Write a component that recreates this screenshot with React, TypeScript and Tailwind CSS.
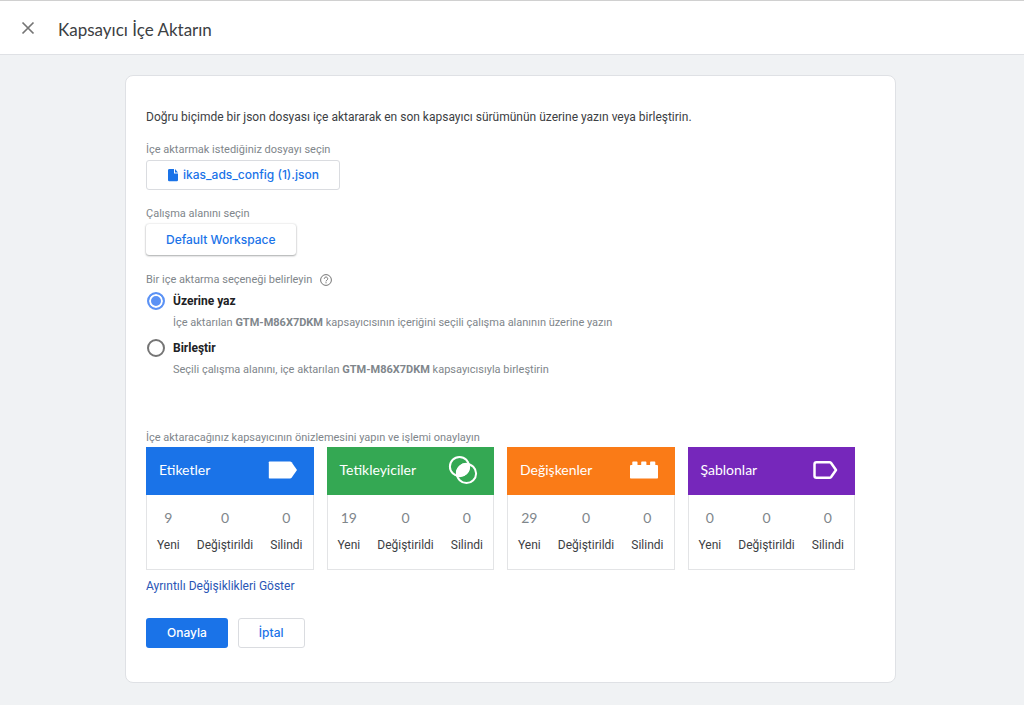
import { useState } from "react";
import type { ReactNode } from "react";

type Summary = {
    title: string;
    color: string;
    icon: ReactNode;
    counts: [number, number, number];
};

const COUNT_LABELS = ["Yeni", "Değiştirildi", "Silindi"];

const summaries: Summary[] = [
    {
        title: "Etiketler",
        color: "bg-[#1a73e8]",
        counts: [9, 0, 0],
        icon: (
            <svg viewBox="0 0 30 30" className="size-[30px]" fill="currentColor" aria-hidden="true">
                <path d="M1.500 6.500h20.500q1 0 1.600.8L29 15l-5.400 7.700q-.6.8-1.600.8H1.500q-.7 0-.7-.7V7.200q0-.7.7-.7z" />
            </svg>
        ),
    },
    {
        title: "Tetikleyiciler",
        color: "bg-[#34a853]",
        counts: [19, 0, 0],
        icon: (
            <svg viewBox="0 0 30 30" className="size-[30px]" fill="none" stroke="currentColor" strokeWidth="2" aria-hidden="true">
                <circle cx="11.500" cy="11.500" r="9.600" />
                <circle cx="18.500" cy="18.500" r="9.600" />
                <path d="M20.800 9.200A9.600 9.600 0 0 1 9.200 20.800A9.600 9.600 0 0 1 20.800 9.200z" fill="currentColor" />
            </svg>
        ),
    },
    {
        title: "Değişkenler",
        color: "bg-[#fa7b17]",
        counts: [29, 0, 0],
        icon: (
            <svg viewBox="0 0 30 30" className="size-[30px]" fill="currentColor" aria-hidden="true">
                <path d="M1 11q0-1 1-1h1.300V7.200q0-.7.700-.7h3.800q.7 0 .7.700V10h3.700V7.200q0-.7.700-.7h3.800q.7 0 .7.700V10h3.700V7.200q0-.7.700-.7h3.800q.7 0 .7.700V10H28q1 0 1 1v11.700q0 .8-.8.8H1.800q-.8 0-.8-.8z" />
            </svg>
        ),
    },
    {
        title: "Şablonlar",
        color: "bg-[#7627bb]",
        counts: [0, 0, 0],
        icon: (
            <svg viewBox="0 0 30 30" className="size-[30px]" fill="none" stroke="currentColor" strokeWidth="2.500" strokeLinejoin="round" aria-hidden="true">
                <path d="M7.500 7.200H20.500a2 2 0 0 1 1.600.8L27 15l-4.900 7a2 2 0 0 1-1.600.8H7.500a2 2 0 0 1-2-2V9.200a2 2 0 0 1 2-2z" />
            </svg>
        ),
    },
];

const modes = [
    { id: "overwrite", label: "Üzerine yaz", before: "İçe aktarılan", after: "kapsayıcısının içeriğini seçili çalışma alanının üzerine yazın" },
    { id: "merge", label: "Birleştir", before: "Seçili çalışma alanını, içe aktarılan", after: "kapsayıcısıyla birleştirin" },
];

function SummaryCard({ title, color, icon, counts }: Summary) {
    return (
        <section className="border border-[#e3e4e6]">
            <div className={`-mx-px -mt-px flex h-12 items-center justify-between pr-4 pb-[2px] pl-[13px] text-white ${color}`}>
                <h2 className="font-[Lato,sans-serif] text-sm">{title}</h2>
                {icon}
            </div>
            <dl className="flex justify-between px-[10px] py-[14px]">
                {COUNT_LABELS.map((label, i) => (
                    <div key={label} className="flex flex-col-reverse gap-2 text-center">
                        <dt className="text-xs leading-5 text-[#3c4043]">{label}</dt>
                        <dd className="font-[Lato,sans-serif] text-sm leading-[18px] text-[#80868b]">{counts[i]}</dd>
                    </div>
                ))}
            </dl>
        </section>
    );
}

export default function App() {
    const [mode, setMode] = useState("overwrite");

    return (
        <div className="min-h-screen bg-[#f0f2f4] font-[Roboto,sans-serif] text-[#3c4043]">
            <header className="flex h-[55px] items-center border-t border-b border-t-[#d0d0d0] border-b-[#dfe1e5] bg-white pt-1 pl-[21px]">
                <button type="button" aria-label="Kapat" className="pb-1 text-[#757575]">
                    <svg viewBox="0 0 14 14" className="size-[14px]" stroke="currentColor" strokeWidth="1.700" aria-hidden="true">
                        <path d="M1.500 1.500l11 11M12.500 1.500l-11 11" />
                    </svg>
                </button>
                <h1 className="ml-[23px] font-[Lato,sans-serif] text-[17px] leading-6 text-[#3c4043]">Kapsayıcı İçe Aktarın</h1>
            </header>

            <main className="pt-5 pr-[3px] pb-[22px]">
                <form className="mx-auto max-w-[771px] rounded-lg border border-[#dfe1e5] bg-white pt-[31px] pr-10 pb-[34px] pl-5" onSubmit={(e) => e.preventDefault()}>
                    <p className="text-xs leading-5">Doğru biçimde bir json dosyası içe aktararak en son kapsayıcı sürümünün üzerine yazın veya birleştirin.</p>

                    <p id="file-label" className="mt-[15px] text-[11px] leading-4 text-[#80868b]">İçe aktarmak istediğiniz dosyayı seçin</p>
                    <button type="button" aria-describedby="file-label" className="mt-[2px] flex h-[30px] items-center gap-1 rounded-[3px] border border-[#dadce0] px-5 font-[Inter,sans-serif] text-xs font-medium text-[#1a73e8]">
                        <svg viewBox="0 0 12 14" className="h-[14px] w-3" fill="currentColor" aria-hidden="true">
                            <path d="M2.500 1h4.500v4.500h4V12q0 1.200-1.200 1.200H2.200Q1 13.200 1 12V2.200Q1 1 2.500 1zM8 1l3 3.500H8z" />
                        </svg>
                        ikas_ads_config (1).json
                    </button>

                    <p id="workspace-label" className="mt-4 text-[11px] leading-4 text-[#80868b]">Çalışma alanını seçin</p>
                    <button type="button" aria-describedby="workspace-label" className="mt-[2px] h-[31px] rounded-[3px] px-5 font-[Inter,sans-serif] text-xs font-medium text-[#1a73e8] shadow-[0_1px_2px_rgba(60,64,67,0.4),0_0_2px_rgba(60,64,67,0.2)]">
                        Default Workspace
                    </button>

                    <fieldset className="mt-[17px]">
                        <legend className="flex items-center gap-2 text-[11px] leading-4 text-[#80868b]">
                            Bir içe aktarma seçeneği belirleyin
                            <svg viewBox="0 0 12 12" className="size-3" fill="none" stroke="#757575" aria-hidden="true">
                                <circle cx="6" cy="6" r="5.400" />
                                <path d="M4.300 4.800a1.700 1.700 0 1 1 2.700 1.300Q6 6.700 6 7.400M6 8.200v1.100" />
                            </svg>
                        </legend>
                        <div className="mt-[3px] flex flex-col gap-[7px]">
                            {modes.map(({ id, label, before, after }) => (
                                <div key={id} className="grid grid-cols-[18px_1fr] items-center gap-x-2 pl-px">
                                    <input
                                        type="radio"
                                        id={id}
                                        name="mode"
                                        checked={mode === id}
                                        onChange={() => setMode(id)}
                                        aria-describedby={`${id}-hint`}
                                        className="size-[18px] appearance-none rounded-full border-2 border-[#757575] bg-white checked:border-[#5b92f5] checked:bg-[#5b92f5] checked:shadow-[inset_0_0_0_2px_white]"
                                    />
                                    <label htmlFor={id} className="text-xs leading-5 font-bold text-[#202124]">{label}</label>
                                    <p id={`${id}-hint`} className="col-start-2 mt-1 text-[11px] leading-4 text-[#80868b]">
                                        {before} <b>GTM-M86X7DKM</b> {after}
                                    </p>
                                </div>
                            ))}
                        </div>
                    </fieldset>

                    <p className="mt-[52px] text-[11px] leading-4 text-[#80868b]">İçe aktaracağınız kapsayıcının önizlemesini yapın ve işlemi onaylayın</p>
                    <div className="mt-px grid grid-cols-4 gap-[13px]">
                        {summaries.map((summary) => (
                            <SummaryCard key={summary.title} {...summary} />
                        ))}
                    </div>

                    <a href="#changes" className="mt-[6px] inline-block text-xs leading-5 text-[#2a56b5]">Ayrıntılı Değişiklikleri Göster</a>

                    <div className="mt-[21px] flex gap-[10px] font-[Inter,sans-serif] text-xs font-medium">
                        <button type="submit" className="h-[30px] rounded-[3px] bg-[#1a73e8] px-[21px] text-white">Onayla</button>
                        <button type="button" className="h-[30px] rounded-[3px] border border-[#dadce0] px-5 text-[#1a73e8]">İptal</button>
                    </div>
                </form>
            </main>
        </div>
    );
}
